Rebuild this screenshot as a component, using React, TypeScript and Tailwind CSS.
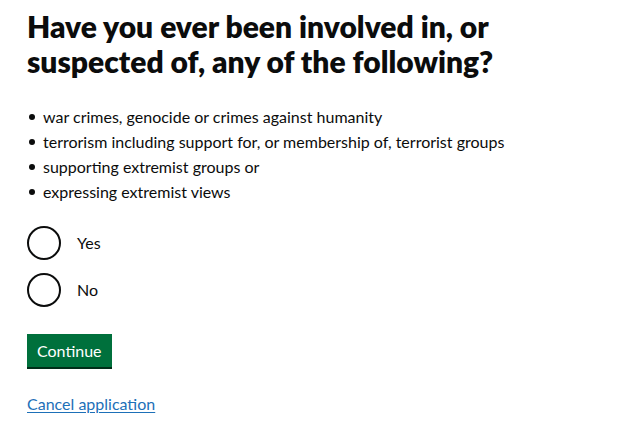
export default function App() {
  const items = [
    "war crimes, genocide or crimes against humanity",
    "terrorism including support for, or membership of, terrorist groups",
    "supporting extremist groups or",
    "expressing extremist views",
  ];
  return (
    <main className="min-h-screen bg-white text-[#0b0c0c] px-[27px] pt-[9px] font-['Lato',Arial,sans-serif]">
      <h1 className="text-[30px] leading-[35px] font-extrabold max-w-[520px]">
        Have you ever been involved in, or suspected of, any of the following?
      </h1>

      <ul className="mt-[25px] flex flex-col">
        {items.map((item) => (
          <li key={item} className="flex items-center text-[16px] leading-[25px]">
            <span className="w-[6px] h-[6px] rounded-full bg-[#0b0c0c] ml-[2px] mr-[8px]" />
            {item}
          </li>
        ))}
      </ul>

      <div className="mt-[22px] flex flex-col gap-[13px]">
        {["Yes", "No"].map((opt) => (
          <label key={opt} className="flex items-center gap-[16px]">
            <span className="w-[34px] h-[34px] rounded-full border-2 border-[#0b0c0c]" />
            <span className="text-[16px]">{opt}</span>
          </label>
        ))}
      </div>

      <button className="mt-[27px] block bg-[#00703c] text-white text-[16px] leading-[20px] px-[10px] pt-[7px] pb-[6px] shadow-[0_2px_0_#002d18]">
        Continue
      </button>

      <a href="#" className="mt-[25px] inline-block text-[#1d70b8] underline underline-offset-2 text-[16px] leading-[24px]">
        Cancel application
      </a>
    </main>
  );
}
